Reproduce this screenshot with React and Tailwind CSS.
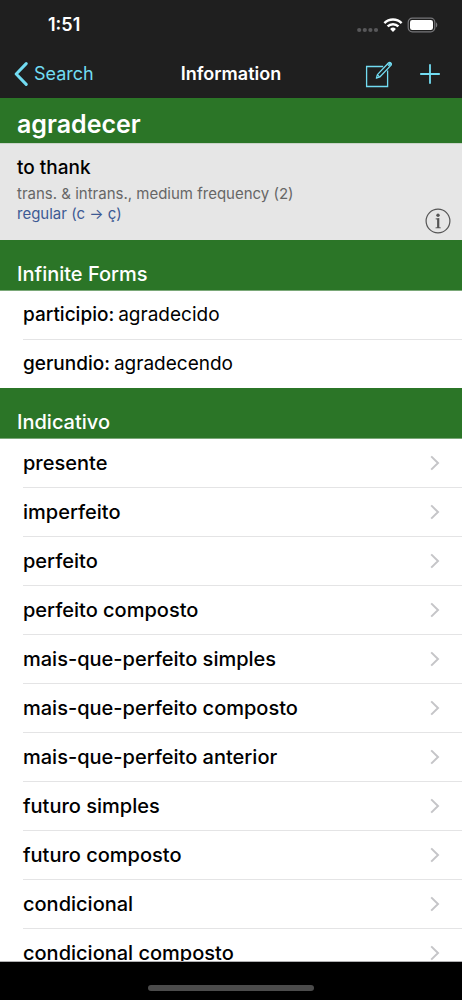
import React from 'react';

const infiniteForms = [
  { label: 'participio', value: 'agradecido' },
  { label: 'gerundio', value: 'agradecendo' },
];

const indicativo = [
  'presente',
  'imperfeito',
  'perfeito',
  'perfeito composto',
  'mais-que-perfeito simples',
  'mais-que-perfeito composto',
  'mais-que-perfeito anterior',
  'futuro simples',
  'futuro composto',
  'condicional',
  'condicional composto',
];

function StatusBar() {
  return (
    <div className="flex h-[50px] items-center justify-between pl-12 pr-6 text-white">
      <span className="text-lg font-semibold">1:51</span>
      <div className="flex items-center">
        <svg width="22" height="20" viewBox="0 0 22 20" fill="#58585a" aria-hidden="true">
          <circle cx="2.2" cy="15" r="2.1" />
          <circle cx="7.8" cy="15" r="2.1" />
          <circle cx="13.4" cy="15" r="2.1" />
          <circle cx="19" cy="15" r="2.1" />
        </svg>
        <svg className="ml-1" width="20" height="16" viewBox="0 0 20 16" aria-hidden="true">
          <g fill="none" stroke="#fff" strokeWidth="2.5">
            <path d="M1.4 6.1a12.2 12.2 0 0 1 17.2 0" />
            <path d="M4.6 9.4a7.7 7.7 0 0 1 10.8 0" />
          </g>
          <path d="M10 14.9l-2.9-3a4.1 4.1 0 0 1 5.8 0z" fill="#fff" />
        </svg>
        <svg className="ml-1" width="31" height="16" viewBox="0 0 31 16" aria-hidden="true">
          <rect x="1.2" y="1.2" width="26.6" height="13.6" rx="4" fill="none" stroke="#77777a" strokeWidth="1.2" />
          <rect x="3" y="3" width="23" height="10" rx="2.2" fill="#fff" />
          <path d="M29 5.6c1.7.6 1.7 4.2 0 4.8z" fill="#77777a" />
        </svg>
      </div>
    </div>
  );
}

function NavBar() {
  return (
    <nav className="grid h-12 grid-cols-[1fr_auto_1fr] items-center">
      <a href="#search" className="flex items-center gap-1.5 pl-3.5 text-lg text-[#72dcf2]">
        <svg width="14" height="24" viewBox="0 0 14 24" fill="none" aria-hidden="true">
          <path d="M12.2 1.6L2.2 12l10 10.4" stroke="#72dcf2" strokeWidth="3" strokeLinecap="round" strokeLinejoin="round" />
        </svg>
        Search
      </a>
      <h1 className="text-lg font-semibold text-white">Information</h1>
      <div className="flex items-center justify-end gap-[26px] pr-[21px]">
        <button type="button" aria-label="Edit">
          <svg width="28" height="28" viewBox="0 0 28 28" fill="none" stroke="#72dcf2" strokeWidth="1.3" aria-hidden="true">
            <path d="M18.2 6.5H1.6v20h21V10.4" />
            <path d="M12.4 14.6L23.4 3a1.7 1.7 0 0 1 2.5 2.4L14.8 17l-3.4 1.2z" strokeLinejoin="round" />
            <path d="M22.4 4.1l2.4 2.3M12.3 14.8l2.3 2.2" />
            <path d="M24.2 3.2l1.5 1.5" strokeWidth="2.4" />
          </svg>
        </button>
        <button type="button" aria-label="Add">
          <svg width="22" height="22" viewBox="0 0 22 22" stroke="#72dcf2" strokeWidth="1.8" aria-hidden="true">
            <path d="M11 1.2v19.6M1.2 11h19.6" />
          </svg>
        </button>
      </div>
    </nav>
  );
}

function SectionHeader({ title }) {
  return (
    <h3 className="flex h-[51px] items-end border-b border-[#7aa878] bg-[#2b7527] px-[17px] pb-0.5 text-xl font-medium text-white">
      {title}
    </h3>
  );
}

function Chevron() {
  return (
    <svg width="10" height="16" viewBox="0 0 10 16" fill="none" aria-hidden="true">
      <path d="M1.2 1.4L8 8l-6.8 6.6" stroke="#c5c5c8" strokeWidth="2" />
    </svg>
  );
}

function App() {
  return (
    <div className="flex h-screen flex-col bg-white font-['Inter','Liberation_Sans',sans-serif] text-black">
      <header className="shrink-0 bg-[#1f1f1f]">
        <StatusBar />
        <NavBar />
      </header>

      <main className="min-h-0 flex-1 overflow-hidden">
        <h2 className="flex h-[45px] items-center bg-[#2b7527] px-[17px] pt-2 text-[25px] font-semibold text-white">
          agradecer
        </h2>
        <section className="flex h-[97px] items-end justify-between border-t border-[#c9d3c9] bg-[#e6e6e6] pb-1.5 pl-[17px] pr-[11px]">
          <div className="self-start pt-2">
            <p className="text-[19px] leading-8 font-medium">to thank</p>
            <p className="text-[15px] leading-5 text-[#666]">trans. &amp; intrans., medium frequency (2)</p>
            <p className="text-[15px] leading-5 text-[#3d5a94]">regular (c → ç)</p>
          </div>
          <button type="button" aria-label="Verb details">
            <svg width="26" height="26" viewBox="0 0 26 26" fill="none" aria-hidden="true">
              <circle cx="13" cy="13" r="11.9" stroke="#555" strokeWidth="1.2" />
              <circle cx="13" cy="7.2" r="1.7" fill="#555" />
              <path d="M10.6 10.6l3.7-.5v9.2l1.5.3v.7h-5.3v-.7l1.6-.3v-7.8l-1.5-.2z" fill="#555" />
            </svg>
          </button>
        </section>

        <SectionHeader title="Infinite Forms" />
        <ul className="pl-[23px]">
          {infiniteForms.map((form) => (
            <li key={form.label} className="border-b border-[#e4e4e5] last:border-b-0">
              <p className="flex h-12 items-center text-[19px]">
                <span className="font-medium">{form.label}:</span>
                <span className="ml-1">{form.value}</span>
              </p>
            </li>
          ))}
        </ul>

        <SectionHeader title="Indicativo" />
        <ul className="pl-[23px]">
          {indicativo.map((tense) => (
            <li key={tense} className="border-b border-[#e4e4e5]">
              <a href="#tense" className="flex h-12 items-center justify-between pr-[22px] text-xl font-medium">
                {tense}
                <Chevron />
              </a>
            </li>
          ))}
        </ul>
      </main>

      <footer className="flex h-[39px] shrink-0 items-end justify-center border-t border-[#b0b0b2] bg-black pb-[9px]">
        <div className="h-1.5 w-[36%] rounded-full bg-[#4b4b4b]" />
      </footer>
    </div>
  );
}

export default App;
